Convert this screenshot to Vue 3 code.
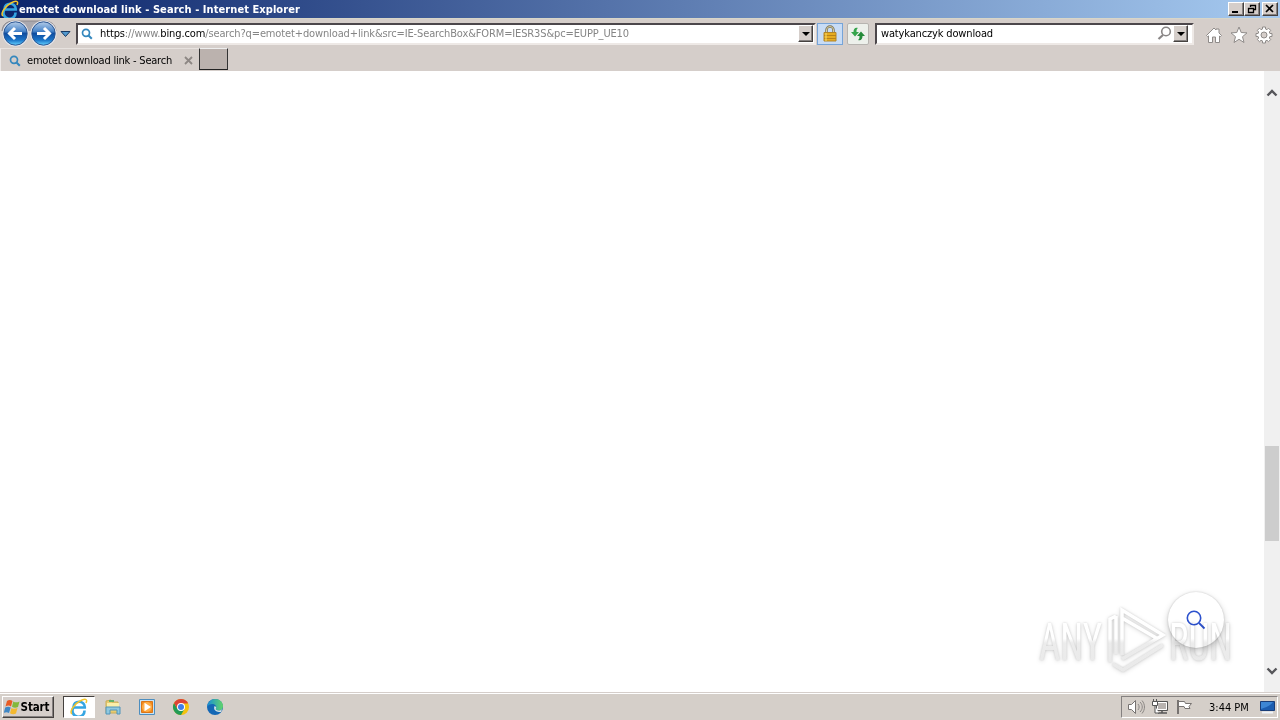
<template>
    <div class="screen">
        <header class="titlebar">
            <svg class="title-logo" width="18" height="18" viewBox="0 0 18 18">
                <use href="#ie" />
            </svg>
            <span class="title-text">{{ pageTitle }} - Internet Explorer</span>
            <div class="window-buttons">
                <button class="win-btn"><svg width="12" height="10"><path d="M2 8h6" stroke="#000" stroke-width="2" /></svg></button>
                <button class="win-btn"><svg width="12" height="10"><path d="M4.500 3V1.500h5v4H8M4 1.500h6M2.500 4.500h5v4h-5zM2 4.500h6" fill="none" stroke="#000" stroke-width="1.300" /></svg></button>
                <button class="win-btn close"><svg width="12" height="10"><path d="M2 1l7 7M9 1L2 8" stroke="#000" stroke-width="1.700" /></svg></button>
            </div>
        </header>

        <nav class="toolbar">
            <svg class="arrows" width="76" height="30" viewBox="0 0 76 30">
                <defs>
                    <linearGradient id="ball" x1="0" y1="0" x2="0" y2="1">
                        <stop offset="0" stop-color="#b4cce8" />
                        <stop offset=".4" stop-color="#4a86ca" />
                        <stop offset=".5" stop-color="#0f4da0" />
                        <stop offset=".78" stop-color="#1a74c8" />
                        <stop offset="1" stop-color="#67d4ff" />
                    </linearGradient>
                </defs>
                <path d="M2 12C3 4 8 2 15 2h28c8 0 12 3 13 10" fill="#aaa8ae" stroke="#89858a" />
                <circle cx="15.500" cy="14.500" r="13" fill="#e8e9ee" />
                <circle cx="43.500" cy="14.500" r="13" fill="#e8e9ee" />
                <circle cx="15.500" cy="14.500" r="11.700" fill="url(#ball)" stroke="#2a5592" />
                <circle cx="43.500" cy="14.500" r="11.700" fill="url(#ball)" stroke="#2a5592" />
                <path d="M22 14.500H10M15 9l-5.500 5.500L15 20" fill="none" stroke="#fff" stroke-width="3" />
                <path d="M37 14.500h12M44 9l5.500 5.500L44 20" fill="none" stroke="#fff" stroke-width="3" />
                <path d="M61 12.500h9L65.500 17.500z" fill="#5299ce" stroke="#173963" />
            </svg>
            <div class="address">
                <svg class="glass" width="12" height="12" viewBox="0 0 12 12"><use href="#search" /></svg>
                <span class="url"><b>https</b>://www.<b>bing.com</b>/search?q=emotet+download+link&amp;src=IE-SearchBox&amp;FORM=IESR3S&amp;pc=EUPP_UE10</span>
                <button class="drop"><svg width="8" height="4"><path d="M0 0h8L4 4z" /></svg></button>
            </div>
            <button class="lock">
                <svg width="16" height="18" viewBox="0 0 16 18">
                    <path d="M4.500 8V5a3.500 3.500 0 017 0v3" fill="none" stroke="#77715d" stroke-width="2.500" />
                    <path d="M4.500 8V5a3.500 3.500 0 017 0v3" fill="none" stroke="#d9cf9c" />
                    <path d="M2 7.500h12V16H2z" fill="#e6ac20" stroke="#b28528" />
                    <path d="M2 10.500h12M2 13.500h12" stroke="#b98318" />
                    <path d="M4 8v8" stroke="#f9dc6d" />
                </svg>
            </button>
            <button class="refresh">
                <svg width="16" height="16" viewBox="0 0 16 16">
                    <path d="M8 2C5 1 3.500 3 3.500 6H1l4 4.500L9 6H6.500C6.500 4 6.500 3 8 2z" fill="#35a44b" />
                    <path d="M8 14c3 1 4.500-1 4.500-4H15l-4-4.500L7 10h2.500c0 2 0 3-1.500 4z" fill="#248b39" />
                </svg>
            </button>
            <div class="searchbox">
                <span class="query">{{ query }}</span>
                <svg class="grey-glass" width="15" height="15" viewBox="0 0 15 15"><circle cx="9" cy="5.500" r="4.300" fill="none" stroke="#898686" stroke-width="1.600" /><path d="M6 9l-4.500 4" stroke="#898686" stroke-width="2.200" /></svg>
                <button class="drop"><svg width="8" height="4"><path d="M0 0h8L4 4z" /></svg></button>
            </div>
            <div class="tools">
                <svg width="18" height="18" viewBox="0 0 18 18"><path d="M1.500 9.500L9 2l2 2V3h3v4l2.500 2.500-1.200 1.200-.8-.8V16.500h-4V11h-3v5.500h-4V9.900l-.8.8z" fill="#fff" stroke="#8f8b89" /></svg>
                <svg width="18" height="18" viewBox="0 0 18 18"><path d="M9 1l2.200 5.500 5.800.4-4.500 3.800 1.500 5.800-5-3.200-5 3.200 1.500-5.800L1 6.900l5.800-.4z" fill="#fff" stroke="#8f8b89" /></svg>
                <svg width="18" height="18" viewBox="0 0 18 18"><path d="M7.500 1h3v2l1.500.7 1.500-1.500 2.200 2.200L14.300 6l.6 1.500H17v3h-2.100l-.6 1.500 1.400 1.500-2.200 2.200-1.500-1.400-1.500.6V17h-3v-2.100L6 14.300l-1.500 1.400-2.200-2.200L3.700 12l-.6-1.500H1v-3h2.100L3.700 6 2.300 4.400l2.200-2.200L6 3.700 7.500 3z" fill="#fff" stroke="#8f8b89" /><circle cx="9" cy="9" r="3" fill="#d5ceca" stroke="#8f8b89" /></svg>
            </div>
        </nav>

        <div class="tabs">
            <div class="tab">
                <svg class="glass" width="12" height="12" viewBox="0 0 12 12"><use href="#search" /></svg>
                <span class="tab-text">{{ pageTitle }}</span>
                <svg class="tab-close" width="9" height="9"><path d="M1 1l7 7M8 1L1 8" stroke="#8d8784" stroke-width="1.800" /></svg>
            </div>
            <button class="new-tab"></button>
        </div>

        <main class="page">
            <div class="content"></div>
            <div class="scrollbar">
                <svg class="chevron" width="12" height="8"><path d="M1.500 6.500L6 2l4.500 4.500" fill="none" stroke="#56565a" stroke-width="2.400" /></svg>
                <div class="thumb"></div>
                <svg class="chevron" width="12" height="8"><path d="M1.500 1.500L6 6l4.500-4.500" fill="none" stroke="#56565a" stroke-width="2.400" /></svg>
            </div>
            <button class="bubble">
                <svg width="20" height="20" viewBox="0 0 20 20"><circle cx="8" cy="8" r="6.700" fill="none" stroke="#2c51cd" stroke-width="1.600" /><path d="M13 13l5.500 5.500" stroke="#2c51cd" stroke-width="1.800" /></svg>
            </button>
            <svg class="watermark" width="210" height="76" viewBox="0 0 210 76">
                <defs>
                    <linearGradient id="face" gradientUnits="userSpaceOnUse" x1="0" y1="0" x2="0" y2="76">
                        <stop offset=".44" stop-color="#fff" />
                        <stop offset=".5" stop-color="#ececec" />
                        <stop offset="1" stop-color="#e8e8e8" />
                    </linearGradient>
                </defs>
                <g class="mark">
                    <text x="9" y="55" textLength="63" lengthAdjust="spacingAndGlyphs">ANY</text>
                    <text x="139" y="55" textLength="63" lengthAdjust="spacingAndGlyphs">RUN</text>
                    <path d="M80 57V14l6-3M86 49V11M92 50V5l41 25-41 24M92 13l36 21M83 59l10 6 40-25" />
                </g>
            </svg>
        </main>

        <footer class="taskbar">
            <button class="start">
                <svg width="17" height="16" viewBox="0 0 17 16">
                    <path d="M3 2c2-1.500 4-1 5.500 0L7 7.500C5 6 3.500 6.500 1.500 7.500z" fill="#e85b24" />
                    <path d="M9.300 2.500c2 1.300 4 1 6.200 0L14 8c-2 1-4 1-6-.2z" fill="#83b83c" />
                    <path d="M1.200 8.500c2-1 3.600-1.300 5.500 0L5 14c-2-1.300-3.500-1-5.300 0z" fill="#4087c5" />
                    <path d="M7.500 9c2 1.200 4 1 6 0L12 14.500c-2 1.200-4 1-6-.2z" fill="#f4b930" />
                </svg>
                <span>Start</span>
            </button>
            <div class="launchers">
                <div class="launch active"><svg width="18" height="18" viewBox="0 0 18 18"><use href="#ie" /></svg></div>
                <div class="launch">
                    <svg width="18" height="18" viewBox="0 0 18 18"><path d="M2 3l5-1 1 2h6v11H2z" fill="#e9cc70" stroke="#c8ad58" /><path d="M3 5h12v5H3z" fill="#f9eeaa" /><path d="M5 3h5" stroke="#62b06b" stroke-width="2" /><path d="M2 9h14v7h-3v-4H6v4H2z" fill="#8fc8df" stroke="#4e94ba" /></svg>
                </div>
                <div class="launch">
                    <svg width="18" height="18" viewBox="0 0 18 18"><path d="M1.500 1.500h15v15h-15z" fill="#c9e3f4" stroke="#4d8ebf" /><path d="M3.500 3.500h11v11h-11z" fill="#f28a1c" stroke="#da7518" /><circle cx="9" cy="9" r="5" fill="#ffad46" /><path d="M6.500 4.800v8.400L13 9z" fill="#fff" /></svg>
                </div>
                <div class="launch">
                    <svg width="18" height="18" viewBox="0 0 18 18"><circle cx="9" cy="9" r="8" fill="#f4c20d" /><path d="M9 9L2.070 5A8 8 0 0115.930 5H9z" fill="#dc4437" /><path d="M2.070 5A8 8 0 009 17l3.500-6H5.500z" fill="#239b56" /><path d="M2.070 5l3.500 6L9 5.500h6.900L14 3z" fill="#dc4437" /><circle cx="9" cy="9" r="4" fill="#fff" /><circle cx="9" cy="9" r="3" fill="#3f7ee8" /></svg>
                </div>
                <div class="launch">
                    <svg width="18" height="18" viewBox="0 0 18 18">
                        <defs><linearGradient id="wave" x1="0" y1="0" x2="1" y2="0"><stop offset="0" stop-color="#178ed8" /><stop offset="1" stop-color="#62d569" /></linearGradient></defs>
                        <circle cx="9" cy="9" r="8" fill="#1467b5" />
                        <path d="M1 9C2 4 5 1 9 1c5 0 8 3.500 8 7 0 3-2 4.500-4.500 4.500-2 0-3.500-1-2.500-2.500 1-1.500-1-4-3.500-4C4 6 2 7 1 9z" fill="url(#wave)" />
                        <path d="M10 10c-1 1.500.5 2.500 2.500 2.500 1.400 0 2.600-.5 3.500-1.300L15 14c-5 0-8-2-6.500-6C10 8.500 10.500 9.300 10 10z" fill="#d5e3e4" />
                    </svg>
                </div>
            </div>
            <div class="tray">
                <svg width="18" height="16" viewBox="0 0 18 16"><path d="M1.500 5.500h3l4-4v13l-4-4h-3z" fill="#fff" stroke="#777371" /><path d="M11 5c1.500 2 1.500 4 0 6M13 3c3 3 3 7 0 10M15 1.500c3.300 4 3.300 9 0 13" fill="none" stroke="#8b8784" /></svg>
                <svg width="18" height="16" viewBox="0 0 18 16"><path d="M5.500 2.500h11v9h-11z" fill="#b8b3b0" stroke="#555" /><path d="M6.500 3.500h9v7h-9z" fill="none" stroke="#fff" /><path d="M7 14h9M11 12v2" stroke="#555" stroke-width="1.500" /><path d="M1.500 2.500h5v4h-5zM2.500 0v2M5.500 0v2M4 7v7h4" fill="#fff" stroke="#555" /></svg>
                <svg width="18" height="16" viewBox="0 0 18 16"><path d="M3.500 2.500h6l1 2h6l-2.500 3 1 2h-5l-1-2H3.500z" fill="#fff" stroke="#777371" /><path d="M3 1v14" stroke="#777371" stroke-width="2" /></svg>
                <span class="clock">{{ time }}</span>
                <svg class="desktop" width="17" height="16" viewBox="0 0 17 16"><path d="M1.500 2.500h14v9h-14z" fill="#1c5db0" stroke="#193d78" /><path d="M2 10C6 8 10 8 14 3H2z" fill="#3d86d4" /><path d="M3 13.500h11" stroke="#eef3f8" stroke-width="2" /></svg>
            </div>
        </footer>

        <svg class="symbols" width="0" height="0">
            <symbol id="ie" viewBox="0 0 18 18">
                <path d="M14.500 12.500A6 6 0 113.500 9.500h11.300C15 5.500 12 3.800 9.300 3.800 6 3.800 3.800 5.800 3.500 9" fill="none" stroke="#35a5e2" stroke-width="2.600" />
                <path d="M2 16C-1 14 4 6 10 3c5-3 8-2 6 2" fill="none" stroke="#f3c52c" stroke-width="1.500" />
            </symbol>
            <symbol id="search" viewBox="0 0 12 12">
                <circle cx="5" cy="4.800" r="3.500" fill="none" stroke="#3487bd" stroke-width="1.700" />
                <path d="M7.500 7.500l3.300 3.300" stroke="#3487bd" stroke-width="2" />
            </symbol>
        </svg>
    </div>
</template>

<script setup>
import { ref } from 'vue';

const pageTitle = ref("emotet download link - Search");
const query = ref("watykanczyk download");
const time = ref("3:44 PM");
</script>

<style>
body {
    margin: 0;
    overflow: hidden;
}
</style>

<style scoped>
.screen {
    position: relative;
    display: flex;
    flex-direction: column;
    width: 1280px;
    height: 720px;
    overflow: hidden;
    background: #fff;
    font-family: "DejaVu Sans Condensed", "DejaVu Sans", sans-serif;
    font-stretch: condensed;
    font-size: 11px;
    color: #000;
}
.screen * {
    box-sizing: border-box;
}
svg {
    display: block;
    flex: none;
}
button {
    display: flex;
    align-items: center;
    justify-content: center;
    flex: none;
    padding: 0;
    font-family: inherit;
    background: #d5ceca;
    border: 1px solid;
    border-color: #fff #45413f #45413f #fff;
}
span {
    white-space: nowrap;
}
.titlebar {
    display: flex;
    align-items: center;
    height: 18px;
    padding: 0 2px 0 1px;
    background: linear-gradient(90deg, #0b246a, #a6caf0);
}
.title-text {
    color: #fff;
    font-weight: bold;
    letter-spacing: 0.07px;
}
.window-buttons {
    display: flex;
    margin-left: auto;
}
.win-btn {
    width: 16px;
    height: 14px;
    box-shadow: inset -1px -1px #858180;
}
.close {
    margin-left: 2px;
}
.toolbar {
    display: flex;
    align-items: center;
    height: 30px;
    background: #d5ceca;
    border-top: 1px solid #d8d6c8;
}
.address,
.searchbox {
    display: flex;
    align-items: center;
    height: 22px;
    background: #fff;
    border: 2px solid;
    border-color: #4c474b #eee9e6 #eee9e6 #4c474b;
}
.address {
    width: 740px;
    padding: 0 1px 0 3px;
}
.url {
    margin-left: 7px;
    color: #858585;
    letter-spacing: -0.13px;
}
.url b {
    color: #000;
    font-weight: normal;
}
.drop {
    width: 15px;
    height: 17px;
    margin-left: auto;
    box-shadow: inset -1px -1px #858180;
}
.lock {
    width: 26px;
    height: 22px;
    margin-left: 1px;
    background: #c8dcf5;
    border-color: #76a4d8;
}
.refresh {
    width: 22px;
    height: 22px;
    margin-left: 4px;
    background: #edf0eb;
    border-color: #b7b4b0;
    border-radius: 2px;
}
.searchbox {
    width: 319px;
    margin-left: 6px;
    padding: 0 4px 0 4px;
}
.query {
    letter-spacing: -0.15px;
}
.grey-glass {
    margin-left: auto;
    margin-right: 1px;
}
.searchbox .drop {
    margin-left: 0;
}
.tools {
    display: flex;
    gap: 7px;
    margin: 2px 0 0 11px;
}
.tabs {
    display: flex;
    height: 23px;
    background: #d5ceca;
}
.tab {
    display: flex;
    align-items: center;
    width: 199px;
    padding: 1px 0 0 8px;
    border-left: 1px solid #eeeae8;
    border-top: 1px solid #e7e2df;
}
.tab-text {
    margin-left: 6px;
    letter-spacing: -0.21px;
}
.tab-close {
    margin-left: auto;
    margin-right: 6px;
}
.new-tab {
    width: 29px;
    height: 22px;
    background: #bbb2ae;
    border-color: #eee #333 #222 #333;
}
.page {
    position: relative;
    display: flex;
    height: 621px;
}
.content {
    flex: 1;
    background: #fff;
}
.scrollbar {
    display: flex;
    flex-direction: column;
    align-items: center;
    width: 16px;
    padding: 18px 0 17px;
    background: #f0f0f0;
}
.thumb {
    width: 14px;
    height: 95px;
    margin: 349px 0 auto;
    background: #cdcdcd;
}
.bubble {
    position: absolute;
    left: 1168px;
    top: 521px;
    width: 56px;
    height: 56px;
    background: #fff;
    border: none;
    border-radius: 50%;
    box-shadow: 0 0 2px rgba(0, 0, 0, 0.2), 0 3px 7px rgba(0, 0, 0, 0.22);
}
.bubble svg {
    margin-right: 1px;
}
.watermark {
    position: absolute;
    left: 1030px;
    top: 534px;
    font-family: Roboto, "Liberation Sans", sans-serif;
    font-size: 52px;
    mix-blend-mode: multiply;
}
.mark {
    fill: none;
    stroke: url(#face);
    stroke-width: 3.5px;
    filter: drop-shadow(0 0 1px rgba(0, 0, 0, 0.14)) drop-shadow(0 1px 2px rgba(0, 0, 0, 0.14));
}
.mark text {
    fill: url(#face);
    stroke: none;
}
.taskbar {
    display: flex;
    align-items: center;
    height: 28px;
    padding: 1px 2px 0 2px;
    background: #d5cfc9;
    border-top: 1px solid #d5ceca;
    box-shadow: inset 0 1px #fff;
}
.start {
    width: 52px;
    height: 22px;
    padding-right: 3px;
    font-size: 11.5px;
    font-weight: bold;
    letter-spacing: -0.1px;
    box-shadow: inset -1px -1px #858180;
}
.launchers {
    display: flex;
    gap: 2px;
    margin-left: 9px;
}
.launch {
    display: flex;
    align-items: center;
    justify-content: center;
    width: 32px;
    height: 22px;
}
.active {
    background: #fff;
    border: 1px solid;
    border-color: #45413f #fff #fff #45413f;
}
.tray {
    display: flex;
    align-items: center;
    width: 157px;
    height: 22px;
    margin-left: auto;
    padding: 0 1px 0 5px;
    gap: 6px;
    border: 1px solid;
    border-color: #858180 #fff #fff #858180;
}
.clock {
    margin-left: 10px;
}
.desktop {
    margin-left: auto;
}
.symbols {
    position: absolute;
}
</style>
